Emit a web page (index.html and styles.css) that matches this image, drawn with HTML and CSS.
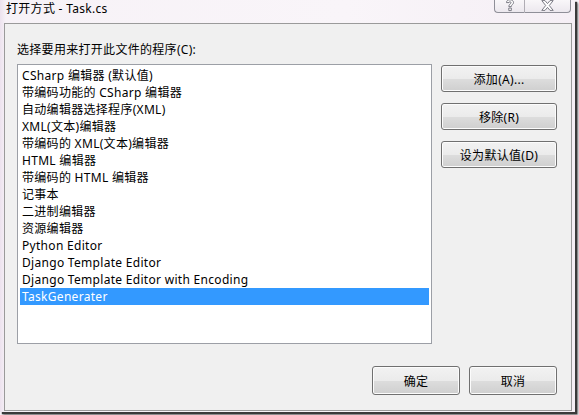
FILE: index.html
```html
<!DOCTYPE html>
<html lang="zh-CN">
<head>
<meta charset="utf-8">
<title>打开方式 - Task.cs</title>
<link rel="stylesheet" href="styles.css">
</head>
<body>
<div class="window">
  <div class="titlebar">
    <span class="title">打开方式 - Task.cs</span>
    <div class="caption">
      <div class="cap-btn help">
        <svg width="10" height="13" viewBox="0 0 10 13"><path d="M1.5 3.6 C1.5 1.4 3.2 0.8 5 0.8 C7 0.8 8.5 1.9 8.5 3.6 C8.5 5.3 6.3 5.7 6.3 7.6 L3.8 7.6 C3.8 5.2 6 4.9 6 3.7 C6 3 5.5 2.7 5 2.7 C4.3 2.7 4 3.1 4 3.6 Z M3.8 9 L6.3 9 L6.3 11.6 L3.8 11.6 Z" fill="#fff" stroke="#6e6e78" stroke-width="0.9" stroke-linejoin="round"/></svg>
      </div>
      <div class="cap-btn close">
        <svg width="13" height="11" viewBox="0 0 13 11"><path d="M0.8 0.6 L4 0.6 L6.5 3.6 L9 0.6 L12.2 0.6 L8.3 5.5 L12.2 10.4 L9 10.4 L6.5 7.4 L4 10.4 L0.8 10.4 L4.7 5.5 Z" fill="#fff" stroke="#6e6e78" stroke-width="0.9" stroke-linejoin="round"/></svg>
      </div>
    </div>
  </div>
  <div class="panel">
    <div class="label">选择要用来打开此文件的程序(C):</div>
    <div class="main">
      <div class="listbox">
        <div class="item">CSharp 编辑器 (默认值)</div>
        <div class="item">带编码功能的 CSharp 编辑器</div>
        <div class="item">自动编辑器选择程序(XML)</div>
        <div class="item">XML(文本)编辑器</div>
        <div class="item">带编码的 XML(文本)编辑器</div>
        <div class="item">HTML 编辑器</div>
        <div class="item">带编码的 HTML 编辑器</div>
        <div class="item">记事本</div>
        <div class="item">二进制编辑器</div>
        <div class="item">资源编辑器</div>
        <div class="item">Python Editor</div>
        <div class="item">Django Template Editor</div>
        <div class="item">Django Template Editor with Encoding</div>
        <div class="item selected">TaskGenerater</div>
      </div>
      <div class="side">
        <button class="btn side-btn">添加(A)...</button>
        <button class="btn side-btn">移除(R)</button>
        <button class="btn side-btn">设为默认值(D)</button>
      </div>
    </div>
    <div class="footer">
      <button class="btn foot-btn">确定</button>
      <button class="btn foot-btn">取消</button>
    </div>
  </div>
</div>
</body>
</html>
```

FILE: styles.css
```css
html, body {
  margin: 0;
  padding: 0;
}
body {
  width: 579px;
  height: 415px;
  overflow: hidden;
  background: #f6f1f6;
  font-family: "Noto Sans", "Noto Sans CJK SC", sans-serif;
  font-size: 12px;
  letter-spacing: 0.3px;
  color: #000;
}
.window {
  position: relative;
  width: 575px;
  height: 412px;
  background: linear-gradient(90deg, #ece2ee 0px, #f7f2f7 6px, #f9f5f9 60%, #f5eff5 100%);
  box-shadow: 2px 2px 1px #3a3a3a, 3px 3px 2px #777;
}
.titlebar {
  height: 23px;
  display: flex;
  align-items: flex-start;
  justify-content: space-between;
}
.title {
  padding-left: 6px;
  line-height: 18px;
  color: #000;
}
.caption {
  display: flex;
  margin-right: 4px;
  margin-top: -1px;
}
.cap-btn {
  height: 13px;
  border: 1px solid #8f8f98;
  border-top: none;
  background: linear-gradient(#faf8fa, #ece8ee);
  display: flex;
  align-items: center;
  justify-content: center;
}
.cap-btn.help {
  width: 29px;
  border-bottom-left-radius: 4px;
  border-right: 1px solid #b0adb4;
}
.cap-btn.close {
  width: 45px;
  border-left: none;
  border-bottom-right-radius: 4px;
}
.panel {
  margin-left: 4px;
  width: 554px;
  height: 386px;
  border: 1px solid #9a9a9a;
  background: #f0f0f0;
  padding-left: 12px;
  display: flex;
  flex-direction: column;
}
.label {
  margin-top: 18px;
  line-height: 16px;
  height: 16px;
}
.main {
  display: flex;
  margin-top: 6px;
  gap: 9px;
}
.listbox {
  width: 409px;
  height: 276px;
  border: 1px solid #9c9fa6;
  background: #fff;
  padding: 2px 2px 0 2px;
}
.item {
  height: 17px;
  line-height: 17px;
  padding-left: 2px;
  white-space: nowrap;
}
.item.selected {
  background: #3399ff;
  color: #fff;
}
.side {
  display: flex;
  flex-direction: column;
  gap: 11px;
  padding-top: 1px;
}
.btn {
  font-family: "Noto Sans", "Noto Sans CJK SC", sans-serif;
  font-size: 12px;
  letter-spacing: 0.3px;
  color: #000;
  border: 1px solid #707070;
  border-radius: 3px;
  background: linear-gradient(#f2f2f2 0%, #ebebeb 50%, #dddddd 51%, #cfcfcf 100%);
  box-shadow: inset 0 0 0 1px #fcfcfc;
  padding: 0;
  margin: 0;
}
.side-btn {
  width: 116px;
  height: 27px;
}
.footer {
  display: flex;
  justify-content: flex-end;
  gap: 9px;
  margin-top: 22px;
  padding-right: 14px;
}
.foot-btn {
  width: 88px;
  height: 29px;
}
```
